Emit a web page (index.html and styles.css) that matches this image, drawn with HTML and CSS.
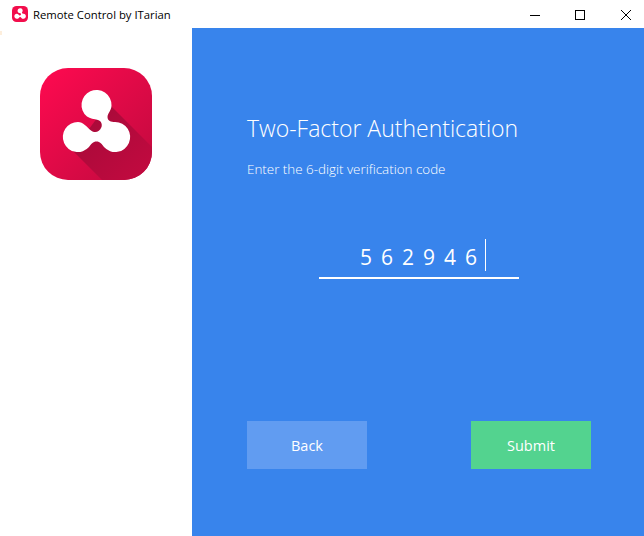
FILE: index.html
```html
<!DOCTYPE html>
<html lang="en">

<head>
    <meta charset="UTF-8">
    <meta name="viewport" content="width=device-width, initial-scale=1.0">
    <title>Remote Control by ITarian</title>
    <link rel="stylesheet" href="styles.css">
</head>

<body>
    <svg class="defs" width="0" height="0">
        <defs>
            <linearGradient id="logo-bg" x1="0" y1="0" x2="1" y2="1">
                <stop offset="0" stop-color="#ff0a50" />
                <stop offset="1" stop-color="#c00a3e" />
            </linearGradient>
            <linearGradient id="logo-shadow" x1="0" y1="0" x2="1" y2="1">
                <stop offset="0" stop-color="#a20a38" />
                <stop offset="1" stop-color="#c40a40" />
            </linearGradient>
            <clipPath id="logo-clip">
                <rect width="112" height="112" rx="28" />
            </clipPath>
            <path id="logo-mark" fill="#fff" d="M71.500 37.500A15 15 0 1 0 47 48.500C50 50.500 54 51 58 52C61 53 62.500 56 61.500 59C59.500 64 55 65.500 51 62.500C47 59 43 54 38 54A15 15 0 1 0 49 79C51 76 53 73.500 56.500 73.500C60 73.500 62 76 64 79A15 15 0 1 0 75 54C71 54 67.500 53 67.500 49C67.500 45 71.500 42.500 71.500 37.500Z" />
        </defs>
    </svg>

    <!-- Title bar -->
    <header class="titlebar">
        <svg class="titlebar-icon" viewBox="0 0 112 112">
            <rect width="112" height="112" rx="32" fill="#f20e4c" />
            <g transform="translate(-11 -11) scale(1.2)"><use href="#logo-mark" /></g>
        </svg>
        <span class="titlebar-text">Remote Control by ITarian</span>
        <div class="window-controls">
            <svg width="10" height="10" viewBox="0 0 10 10"><path d="M0 5.500H10" stroke="#000" /></svg>
            <svg width="10" height="10" viewBox="0 0 10 10"><rect x="0.500" y="0.500" width="9" height="9" fill="none" stroke="#000" /></svg>
            <svg class="close-icon" width="10" height="10" viewBox="0 0 10 10"><path d="M0 0L10 10M10 0L0 10" stroke="#000" /></svg>
        </div>
    </header>

    <div class="window-body">
        <!-- Left column -->
        <aside class="sidebar">
            <svg class="logo" viewBox="0 0 112 112">
                <g clip-path="url(#logo-clip)">
                    <rect width="112" height="112" fill="url(#logo-bg)" />
                    <polygon points="68,35 112,79 112,112 62,112 33,83" fill="url(#logo-shadow)" />
                </g>
                <use href="#logo-mark" />
            </svg>
        </aside>

        <!-- Verification form -->
        <main class="panel">
            <h1>Two-Factor Authentication</h1>
            <p class="hint">Enter the 6-digit verification code</p>

            <div class="code-field">
                <span class="code-value">562946</span>
                <span class="caret"></span>
            </div>

            <div class="actions">
                <button class="btn-back" type="button">Back</button>
                <button class="btn-submit" type="button">Submit</button>
            </div>
        </main>
    </div>
</body>

</html>
```

FILE: styles.css
```css
* {
    box-sizing: border-box;
    margin: 0;
    padding: 0;
}

body {
    display: flex;
    flex-direction: column;
    height: 100vh;
    overflow: hidden;
    background: white;
    font-family: "Open Sans", "Noto Sans", sans-serif;
}

.defs {
    display: block;
    height: 0;
}

/* Title bar */

.titlebar {
    display: flex;
    align-items: center;
    flex: 0 0 28px;
    padding: 0 13px 0 12px;
    color: #000;
}

.titlebar-icon {
    width: 16px;
    height: 16px;
}

.titlebar-text {
    margin-left: 5px;
    font-size: 11.300px;
}

.window-controls {
    display: flex;
    gap: 35px;
    margin-left: auto;
    margin-top: 2px;
}

.close-icon {
    margin-left: 1px;
}

/* Main area */

.window-body {
    display: flex;
    flex: 1;
}

.sidebar {
    position: relative;
    width: 192px;
    padding: 40px 0 0 40px;
}

/* stray mark on the window edge */
.sidebar::before {
    content: "";
    position: absolute;
    top: 3px;
    left: 0;
    width: 2px;
    height: 4px;
    background: #fdeedc;
}

.logo {
    display: block;
    width: 112px;
    height: 112px;
}

.panel {
    flex: 1;
    padding: 82px 53px 0 55px;
    background: #3884ec;
    color: white;
}

.panel h1 {
    font-size: 23px;
    font-weight: 300;
    line-height: 36px;
}

.hint {
    margin-top: 13px;
    font-size: 13.400px;
    font-weight: 300;
    line-height: 20px;
}

.code-field {
    display: flex;
    align-items: center;
    justify-content: center;
    width: 200px;
    height: 40px;
    margin: 60px 0 0 72px;
    padding-left: 8px;
    border-bottom: 2px solid white;
}

.code-value {
    margin-bottom: 2px;
    font-size: 21px;
    letter-spacing: 9px;
    line-height: 32px;
}

.caret {
    width: 1px;
    height: 32px;
    margin: 0 0 6px -1px;
    background: white;
}

.actions {
    display: flex;
    justify-content: space-between;
    margin-top: 142px;
}

.actions button {
    width: 120px;
    height: 48px;
    border: none;
    color: white;
    font-family: inherit;
    font-size: 14.500px;
    font-weight: 500;
}

.btn-back {
    background: #619cf1;
}

.btn-submit {
    background: #53d38f;
}
```
